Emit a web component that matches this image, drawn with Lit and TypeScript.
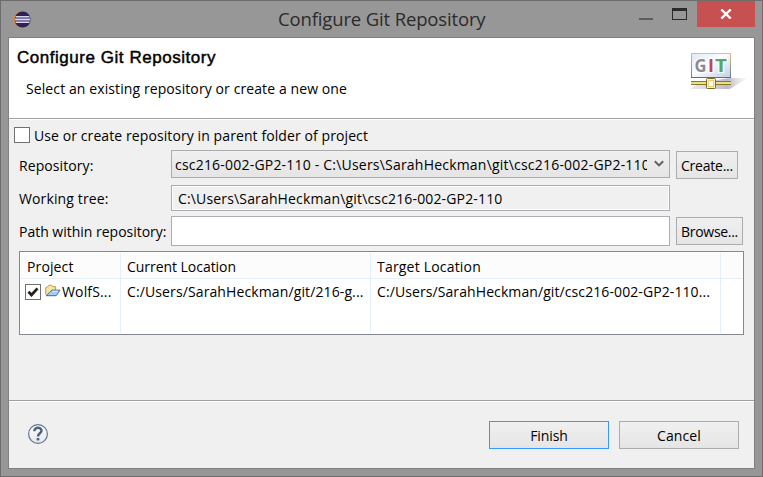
import { LitElement, html, css, svg } from "lit";
import { customElement, property } from "lit/decorators.js";

/** A run of text whose tracking is adjusted so that it fills a given width. */
@customElement("fit-text")
class FitText extends LitElement {
  @property({ type: Number }) width = 0;
  @property() text = "";

  static styles = css`
    :host { display: block; flex: none; white-space: pre; }
    .run { display: inline-block; }
  `;

  firstUpdated() {
    const run = this.renderRoot.querySelector(".run") as HTMLElement;
    const natural = run.getBoundingClientRect().width;
    run.style.letterSpacing = `${(this.width - natural) / this.text.length}px`;
  }

  render() {
    return html`<span class="run">${this.text}</span>`;
  }
}

const t = (text: string, width: number) => html`<fit-text .text=${text} .width=${width}></fit-text>`;

const eclipseIcon = svg`<svg width="18" height="18" viewBox="0 0 18 18">
  <circle cx="7.9" cy="8.5" r="7.8" fill="#e08c2c"/>
  <circle cx="9.6" cy="8.5" r="8" fill="#2c2255"/>
  <path d="M2.6 5.7h13.8M1.8 8.5h15.4M2.6 11.3h13.8" stroke="#d9d6ea" stroke-width="1.5"/>
  <path d="M2.3 7.1h14.6M2.3 9.9h14.6" stroke="#8d86b8" stroke-width="1.1"/>
</svg>`;

const gitIcon = svg`<svg width="60" height="40" viewBox="0 0 60 40">
  <defs>
    <linearGradient id="panel" x1="0" y1="0" x2="1" y2="1"><stop offset="0" stop-color="#dfe9f4"/><stop offset=".45" stop-color="#fbfcfe"/><stop offset="1" stop-color="#bfcfe6"/></linearGradient>
    <linearGradient id="frame" x1="0" y1="0" x2="0" y2="1"><stop offset="0" stop-color="#e3bd84"/><stop offset="1" stop-color="#5c8794"/></linearGradient>
    <linearGradient id="shade" x1="0" x2="1"><stop offset="0" stop-color="#d5d1dc" stop-opacity=".5"/><stop offset=".65" stop-color="#bdb8c8"/><stop offset="1" stop-color="#eeeef2" stop-opacity=".3"/></linearGradient>
  </defs>
  <path d="M3 37L12 31L42 26L61 26L43 37Z" fill="url(#shade)"/>
  <rect x="4.5" y="1.5" width="39" height="24" fill="url(#panel)" stroke="url(#frame)"/>
  <path d="M4 25.5h40" stroke="#4f7683"/>
  <g font-family="Open Sans, sans-serif" font-weight="700" font-size="18" stroke="#fff" stroke-width="2" paint-order="stroke">
    <text x="7.5" y="20.3" fill="#8b8b8b" textLength="12" lengthAdjust="spacingAndGlyphs">G</text>
    <text x="21" y="20.3" fill="#bf4650" textLength="6" lengthAdjust="spacingAndGlyphs">I</text>
    <text x="28" y="20.3" fill="#56a667" textLength="12" lengthAdjust="spacingAndGlyphs">T</text>
  </g>
  <path d="M22.5 26v2M26 26v2" stroke="#887a2a" stroke-width="1.5"/>
  <rect x="4" y="29" width="40" height="4" fill="#837a28"/>
  <rect x="4" y="30" width="40" height="2" fill="#e9df8c"/>
  <rect x="19.5" y="26.5" width="9" height="10" rx="1" fill="#fdf0c0" stroke="#7c6a22"/>
  <rect x="21.5" y="28.5" width="5" height="6" fill="#fff9e5" stroke="#e9cf85"/>
</svg>`;

const folderIcon = svg`<svg width="16" height="14" viewBox="0 0 16 14">
  <path d="M.7 10.6V3.6L2.8 2.7L3.8 1.2H6.6L7.8 2.7H10.6V6" fill="#f8e3a0" stroke="#c39b52"/>
  <path d="M1 11.7L4.4 8.6L7 6.1H15L11.2 11.7Z" fill="#a9cdf0" stroke="#3f6cab"/>
  <path d="M7.6 7.2H13" stroke="#dcecfb"/>
</svg>`;

const helpIcon = svg`<svg width="22" height="22" viewBox="0 0 22 22">
  <defs><linearGradient id="hg" x1="0" y1="0" x2="0" y2="1"><stop offset="0" stop-color="#fff"/><stop offset="1" stop-color="#e6e6e6"/></linearGradient></defs>
  <circle cx="11" cy="11" r="9.4" fill="url(#hg)" stroke="#5f7596" stroke-width="1.2"/>
  <path d="M7.4 8.2C7.2 3.6 14.6 3.8 14.5 7.7C14.4 10.4 11 10.3 11 13.5" fill="none" stroke="#4d6187" stroke-width="2.5"/>
  <rect x="9.6" y="15" width="2.8" height="2.6" rx=".8" fill="#4d6187"/>
</svg>`;

@customElement("app-root")
class AppRoot extends LitElement {
  static styles = css`
    :host {
      display: block; width: 763px; height: 477px; overflow: hidden;
      font: 14px/20px "Open Sans", "Noto Sans", sans-serif; color: #000;
    }
    * { box-sizing: border-box; }
    svg { display: block; flex: none; }
    .window {
      height: 477px; background: #979797; border: 1px solid #6d6d6d;
      padding: 0 7px 7px; display: flex; flex-direction: column;
    }
    .titlebar { height: 36px; flex: none; display: grid; grid-template-columns: 270px 1fr auto; }
    .app { padding: 10px 0 0 5px; }
    .title { font-size: 18.5px; line-height: 36px; color: #2b2b2b; }
    .controls { display: flex; align-items: flex-start; }
    .min { width: 14px; height: 2px; margin-top: 17px; background: #5d5d5d; }
    .max { width: 15px; height: 12px; margin: 7px 10px 0 19px; border: 1px solid #2b2b2b; border-top-width: 3px; }
    .close { width: 58px; height: 26px; background: #c75050; display: grid; place-items: center; }
    .client { flex: 1; border: 1px solid #808080; background: #f0f0f0; display: flex; flex-direction: column; }
    .banner {
      height: 81px; flex: none; background: #fff; border-bottom: 1px solid #a0a0a0;
      display: flex; justify-content: space-between; padding: 10px 7px 0 8px;
    }
    .banner h1 { margin: 0; font: 400 17px/20px "Liberation Sans", sans-serif; -webkit-text-stroke: 0.45px #000; }
    .sub { padding: 11px 0 0 9px; }
    .badge { padding-top: 4px; }
    .body { border-top: 1px solid #fff; flex: 1; padding: 7px 10px 0 5px; }
    .check { display: flex; height: 16px; align-items: center; gap: 4px; }
    .check fit-text { padding-top: 1px; }
    .box { width: 16px; height: 16px; border: 1px solid #707070; background: #fff; flex: none; display: grid; place-items: center; }
    .form {
      display: grid; grid-template: 31px 35px 31px / 152px 499px auto;
      padding: 7px 0 0 5px;
    }
    .label { height: 30px; padding-top: 6px; }
    .row2 { padding-top: 8px; }
    .row3 { padding-top: 6px; }
    .combo, .button {
      border: 1px solid #acacac; background: linear-gradient(#f0f0f0, #e5e5e5);
      height: 28px; display: flex; align-items: center;
    }
    .button { padding-top: 2px; }
    .combo { padding: 0 5px 0 3px; justify-content: space-between; }
    .value { width: 472px; overflow: hidden; padding-top: 2px; }
    .side { margin-left: 6px; justify-content: center; }
    .create { width: 62px; margin-top: 1px; }
    .browse { width: 67px; margin-top: 1px; }
    .field { border: 1px solid #abadb3; background: #fff; height: 30px; }
    .readonly { height: 26px; margin-top: 4px; background: #f0f0f0; box-shadow: inset 0 0 0 1px #fff; padding: 3px 0 0 6px; }
    .table {
      height: 84px; margin: 4px 0 0 5px; border: 1px solid #828790; background: #fff; padding: 1px;
      display: grid; grid-template-columns: 100px 250px 350px 1fr;
    }
    .col { border-right: 1px solid #e5effb; min-width: 0; }
    .col:last-child { border-right: 0; }
    .head, .cell { height: 26px; padding-left: 6px; display: flex; align-items: center; }
    .head { background: #fcfcfc; border-bottom: 1px solid #e5effb; padding-top: 2px; }
    .first .cell { padding-left: 4px; }
    .folder { margin: -3px 1px 0 4px; }
    .footer {
      height: 68px; flex: none; border-top: 1px solid #a0a0a0; box-shadow: inset 0 1px #fff;
      display: flex; align-items: flex-start; padding: 20px 15px 0 18px; gap: 10px;
    }
    .help { margin: 2px auto 0 0; }
    .action { width: 120px; justify-content: center; }
    .default { border-color: #3399ff; }
  `;

  column(name: string, nameWidth: number, value: string, valueWidth: number) {
    return html`<div class="col">
      <div class="head">${t(name, nameWidth)}</div>
      <div class="cell">${t(value, valueWidth)}</div>
    </div>`;
  }

  render() {
    return html`<div class="window">
      <div class="titlebar">
        <div class="app">${eclipseIcon}</div>
        <div class="title">${t("Configure Git Repository", 207.5)}</div>
        <div class="controls">
          <div class="min"></div><div class="max"></div>
          <div class="close"><svg width="12" height="10" viewBox="0 0 12 10"><path d="M1.3 .5L10.7 9.5M10.7 .5L1.3 9.5" stroke="#fff" stroke-width="2.4"/></svg></div>
        </div>
      </div>
      <div class="client">
        <div class="banner">
          <div>
            <h1>${t("Configure Git Repository", 199)}</h1>
            <div class="sub">${t("Select an existing repository or create a new one", 321)}</div>
          </div>
          <div class="badge">${gitIcon}</div>
        </div>
        <div class="body">
          <div class="check"><span class="box"></span>${t("Use or create repository in parent folder of project", 334)}</div>
          <div class="form">
            <div class="label">${t("Repository:", 74.5)}</div>
            <div class="combo">
              <div class="value">${t("csc216-002-GP2-110 - C:\\Users\\SarahHeckman\\git\\csc216-002-GP2-110", 475)}</div>
              <svg width="10" height="8" viewBox="0 0 10 8"><path d="M.8 1.2L5 5.4L9.2 1.2" fill="none" stroke="#606060" stroke-width="2"/></svg>
            </div>
            <div class="button side create">${t("Create...", 52)}</div>
            <div class="label row2">${t("Working tree:", 89.5)}</div>
            <div class="field readonly">${t("C:\\Users\\SarahHeckman\\git\\csc216-002-GP2-110", 324.5)}</div>
            <div></div>
            <div class="label row3">${t("Path within repository:", 147.5)}</div>
            <div class="field"></div>
            <div class="button side browse">${t("Browse...", 57)}</div>
          </div>
          <div class="table">
            <div class="col first">
              <div class="head">${t("Project", 46.5)}</div>
              <div class="cell">
                <span class="box"><svg width="12" height="10" viewBox="0 0 12 10"><path d="M1.5 4.8L4.5 8L10.5 1.4" fill="none" stroke="#212121" stroke-width="2.8"/></svg></span>
                <span class="folder">${folderIcon}</span>
                ${t("WolfS...", 49.5)}
              </div>
            </div>
            ${this.column("Current Location", 109, "C:/Users/SarahHeckman/git/216-g...", 236.5)}
            ${this.column("Target Location", 104, "C:/Users/SarahHeckman/git/csc216-002-GP2-110...", 333)}
            <div class="col"><div class="head"></div></div>
          </div>
        </div>
        <div class="footer">
          <div class="help">${helpIcon}</div>
          <div class="button action default">${t("Finish", 37.5)}</div>
          <div class="button action">${t("Cancel", 44)}</div>
        </div>
      </div>
    </div>`;
  }
}
